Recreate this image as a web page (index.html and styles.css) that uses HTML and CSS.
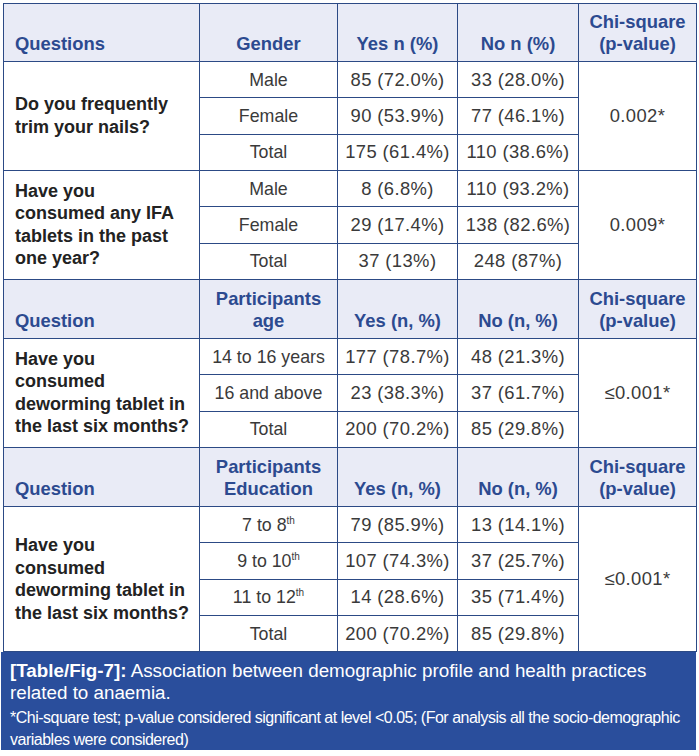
FILE: index.html
```html
<!DOCTYPE html>
<html>
<head>
<meta charset="utf-8">
<link rel="stylesheet" href="styles.css">
</head>
<body>
<div class="fig">
<table class="tbl">
<colgroup>
<col class="c1"><col class="c2"><col class="c3"><col class="c4"><col class="c5">
</colgroup>
<tbody>
<tr class="head h58">
<th class="qh">Questions</th><th>Gender</th><th>Yes n (%)</th><th>No n (%)</th><th>Chi-square<br>(p-value)</th>
</tr>
<tr class="row"><td class="q" rowspan="3">Do you frequently<br>trim your nails?</td><td class="g">Male</td><td>85 (72.0%)</td><td>33 (28.0%)</td><td rowspan="3">0.002*</td></tr>
<tr class="row"><td class="g">Female</td><td>90 (53.9%)</td><td>77 (46.1%)</td></tr>
<tr class="row"><td class="g">Total</td><td>175 (61.4%)</td><td>110 (38.6%)</td></tr>
<tr class="row"><td class="q" rowspan="3">Have you<br>consumed any IFA<br>tablets in the past<br>one year?</td><td class="g">Male</td><td>8 (6.8%)</td><td>110 (93.2%)</td><td rowspan="3">0.009*</td></tr>
<tr class="row"><td class="g">Female</td><td>29 (17.4%)</td><td>138 (82.6%)</td></tr>
<tr class="row"><td class="g">Total</td><td>37 (13%)</td><td>248 (87%)</td></tr>
<tr class="head h59">
<th class="qh">Question</th><th>Participants<br>age</th><th>Yes (n, %)</th><th>No (n, %)</th><th>Chi-square<br>(p-value)</th>
</tr>
<tr class="row"><td class="q" rowspan="3">Have you<br>consumed<br>deworming tablet in<br>the last six months?</td><td class="g">14 to 16 years</td><td>177 (78.7%)</td><td>48 (21.3%)</td><td rowspan="3">&le;0.001*</td></tr>
<tr class="row"><td class="g">16 and above</td><td>23 (38.3%)</td><td>37 (61.7%)</td></tr>
<tr class="row"><td class="g">Total</td><td>200 (70.2%)</td><td>85 (29.8%)</td></tr>
<tr class="head h59">
<th class="qh">Question</th><th>Participants<br>Education</th><th>Yes (n, %)</th><th>No (n, %)</th><th>Chi-square<br>(p-value)</th>
</tr>
<tr class="row"><td class="q" rowspan="4">Have you<br>consumed<br>deworming tablet in<br>the last six months?</td><td class="g">7 to 8<sup>th</sup></td><td>79 (85.9%)</td><td>13 (14.1%)</td><td rowspan="4">&le;0.001*</td></tr>
<tr class="row"><td class="g">9 to 10<sup>th</sup></td><td>107 (74.3%)</td><td>37 (25.7%)</td></tr>
<tr class="row"><td class="g">11 to 12<sup>th</sup></td><td>14 (28.6%)</td><td>35 (71.4%)</td></tr>
<tr class="row last"><td class="g">Total</td><td>200 (70.2%)</td><td>85 (29.8%)</td></tr>
</tbody>
</table>
<div class="caption">
<p class="cap-main"><b>[Table/Fig-7]:</b> Association between demographic profile and health practices related to anaemia.</p>
<p class="cap-note">*Chi-square test; p-value considered significant at level &lt;0.05; (For analysis all the <span class="nw">socio-demographic</span> variables were considered)</p>
</div>
</div>
</body>
</html>
```
FILE: styles.css
```css
html, body {
  margin: 0;
  padding: 0;
  background: #ffffff;
}
body {
  font-family: "Liberation Sans", Arial, sans-serif;
}
.fig {
  margin: 3px 0 0 3px;
  width: 693px;
}
.tbl {
  width: 693px;
  border-collapse: collapse;
  table-layout: fixed;
  font-size: 18.4px;
  letter-spacing: 0.4px;
  color: #3a3a3a;
}
.c1 { width: 196px; }
.c2 { width: 138px; }
.c3 { width: 120px; }
.c4 { width: 121px; }
.c5 { width: 118px; }
.tbl th, .tbl td {
  border: 1px solid #2c4a85;
  padding: 0;
  text-align: center;
  line-height: 22px;
  white-space: nowrap;
}
.tbl .g {
  font-size: 17.8px;
  letter-spacing: 0;
}
.head th {
  background: #e9ebf6;
  color: #2c4a90;
  font-weight: bold;
  font-size: 18.4px;
  letter-spacing: 0;
  vertical-align: bottom;
  padding-bottom: 6px;
}
.h58 { height: 58px; }
.h59 { height: 59px; }
.row { height: 36.33px; }
.row td { vertical-align: middle; }
.head .qh {
  text-align: left;
  padding-left: 11px;
}
.tbl .q {
  text-align: left;
  padding-left: 11px;
  font-weight: bold;
  font-size: 18px;
  letter-spacing: 0;
  color: #222222;
  line-height: 22.5px;
}
sup {
  font-size: 10px;
  letter-spacing: 0;
  line-height: 0;
  vertical-align: 7px;
}
.caption {
  box-sizing: border-box;
  background: #2a4e9c;
  color: #ffffff;
  padding: 8px 8px 0 9px;
  margin-left: -2px;
  width: 695px;
  height: 98px;
}
.cap-main {
  margin: 0;
  font-size: 18.8px;
  line-height: 22px;
}
.cap-note {
  margin: 3px 0 0 0;
  font-size: 16px;
  line-height: 22px;
  letter-spacing: -0.5px;
}
.nw {
  white-space: nowrap;
}
```
